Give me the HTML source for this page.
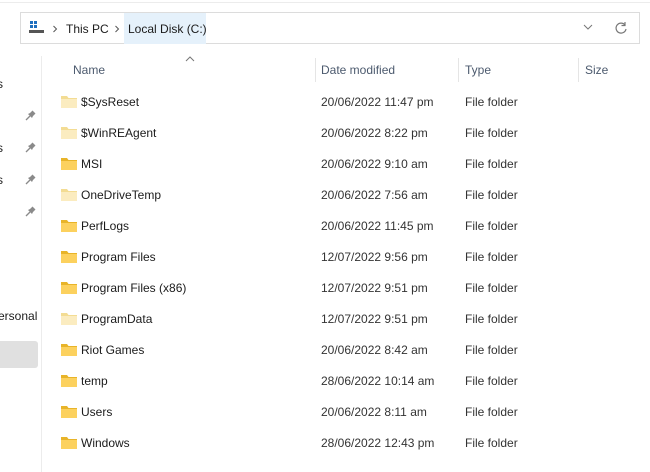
<!DOCTYPE html>
<html><head><meta charset="utf-8"><style>
body{margin:0;width:650px;height:472px;background:#fff;font-family:"Liberation Sans",sans-serif;font-size:12px;color:#1b1b1b;position:relative;overflow:hidden}
.a{position:absolute;white-space:nowrap}
.addr{left:20px;top:12px;width:620px;height:32px;border:1px solid #dcdcdc;box-sizing:border-box}
.crumb{left:124px;top:13px;width:82px;height:31px;background:#e5f1fb;}
.hdr{color:#4c5a6e}
.vl{position:absolute;width:1px;background:#e5e5e5}
.pin{position:absolute;width:12px;height:12px}
</style></head><body>
<div class="a" style="left:0;top:2px;width:650px;height:1px;background:#ececec"></div>
<div class="a addr"></div>
<div class="a crumb"></div>
<svg class="a" style="left:29px;top:20px" width="16" height="14"><rect x="1" y="1" width="3" height="3" fill="#1f6fbf"/><rect x="5" y="1" width="3" height="3" fill="#1f6fbf"/><rect x="1" y="5" width="3" height="3" fill="#1f6fbf"/><rect x="5" y="5" width="3" height="3" fill="#1f6fbf"/><rect x="0" y="10" width="15" height="3" fill="#555"/></svg>
<svg class="a" style="left:52px;top:25px" width="6" height="8"><path d="M1.5 1 L4.5 4 L1.5 7" stroke="#555" fill="none"/></svg>
<div class="a" style="left:66px;top:22px">This PC</div>
<svg class="a" style="left:114px;top:25px" width="6" height="8"><path d="M1.5 1 L4.5 4 L1.5 7" stroke="#555" fill="none"/></svg>
<div class="a" style="left:128px;top:22px">Local Disk (C:)</div>
<svg class="a" style="left:583px;top:24px" width="10" height="6"><path d="M1 1 L5 5 L9 1" stroke="#777" fill="none"/></svg>
<svg class="a" style="left:614px;top:21px" width="14" height="14"><path d="M11 4 A5 5 0 1 0 12 8" stroke="#777" fill="none" stroke-width="1.2"/><path d="M11 1 V4.5 H7.5" stroke="#777" fill="none" stroke-width="1.2"/></svg>
<div class="vl" style="left:41px;top:56px;height:416px;background:#ececec"></div>
<div class="a" style="left:-3px;top:77px">s</div>
<div class="a" style="left:-3px;top:141px">s</div>
<div class="a" style="left:-3px;top:173px">s</div>
<div class="a" style="left:-2px;top:309px">ersonal</div>
<div class="a" style="left:0;top:341px;width:38px;height:27px;background:#e0e0e0;border-radius:0 3px 3px 0"></div>
<svg class="pin" style="left:25px;top:109px" viewBox="0 0 12 12"><path d="M1 11 L5 7" stroke="#8a8a8a" stroke-width="1.3"/><path d="M3 5 L7 9 L8 7 L10.5 4.5 L7.5 1.5 L5 4 Z" fill="#8a8a8a"/></svg>
<svg class="pin" style="left:25px;top:141px" viewBox="0 0 12 12"><path d="M1 11 L5 7" stroke="#8a8a8a" stroke-width="1.3"/><path d="M3 5 L7 9 L8 7 L10.5 4.5 L7.5 1.5 L5 4 Z" fill="#8a8a8a"/></svg>
<svg class="pin" style="left:25px;top:173px" viewBox="0 0 12 12"><path d="M1 11 L5 7" stroke="#8a8a8a" stroke-width="1.3"/><path d="M3 5 L7 9 L8 7 L10.5 4.5 L7.5 1.5 L5 4 Z" fill="#8a8a8a"/></svg>
<svg class="pin" style="left:25px;top:205px" viewBox="0 0 12 12"><path d="M1 11 L5 7" stroke="#8a8a8a" stroke-width="1.3"/><path d="M3 5 L7 9 L8 7 L10.5 4.5 L7.5 1.5 L5 4 Z" fill="#8a8a8a"/></svg>
<svg class="a" style="left:185px;top:56px" width="10" height="6"><path d="M1 5 L5 1 L9 5" stroke="#777" fill="none"/></svg>
<div class="a hdr" style="left:73px;top:63px">Name</div>
<div class="a hdr" style="left:321px;top:63px">Date modified</div>
<div class="a hdr" style="left:465px;top:63px">Type</div>
<div class="a hdr" style="left:585px;top:63px">Size</div>
<div class="vl" style="left:315px;top:58px;height:24px"></div>
<div class="vl" style="left:458px;top:58px;height:24px"></div>
<div class="vl" style="left:578px;top:58px;height:24px"></div>
<div id="rows"></div>
<script>
var d=[["$SysReset","20/06/2022 11:47 pm",1],["$WinREAgent","20/06/2022 8:22 pm",1],["MSI","20/06/2022 9:10 am",0],["OneDriveTemp","20/06/2022 7:56 am",1],["PerfLogs","20/06/2022 11:45 pm",0],["Program Files","12/07/2022 9:56 pm",0],["Program Files (x86)","12/07/2022 9:51 pm",0],["ProgramData","12/07/2022 9:51 pm",1],["Riot Games","20/06/2022 8:42 am",0],["temp","28/06/2022 10:14 am",0],["Users","20/06/2022 8:11 am",0],["Windows","28/06/2022 12:43 pm",0]];
var h="";d.forEach(function(r,i){var y=95+i*31;var c1=r[2]?"#f3dc93":"#e8b429",c2=r[2]?"#fbecc0":"#fcd15e";
h+='<svg class="a" style="left:61px;top:'+(y)+'px" width="16" height="13"><path d="M0 1 H6 L7.5 3 H16 V13 H0Z" fill="'+c1+'"/><rect x="0" y="4" width="16" height="9" fill="'+c2+'"/></svg>';
h+='<div class="a" style="left:81px;top:'+y+'px">'+r[0]+'</div><div class="a" style="left:321px;top:'+y+'px;color:#333">'+r[1]+'</div><div class="a" style="left:465px;top:'+y+'px;color:#333">File folder</div>';});
document.getElementById("rows").innerHTML=h;
</script>
</body></html>
